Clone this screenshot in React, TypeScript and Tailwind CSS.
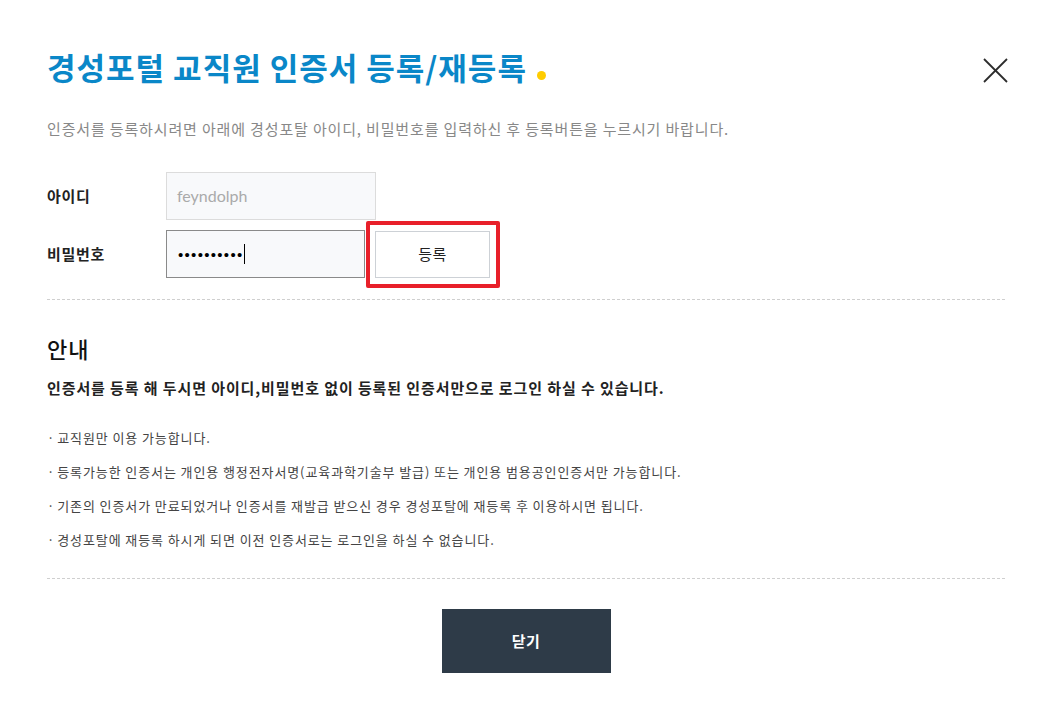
const notices = [
  "교직원만 이용 가능합니다.",
  "등록가능한 인증서는 개인용 행정전자서명(교육과학기술부 발급) 또는 개인용 범용공인인증서만 가능합니다.",
  "기존의 인증서가 만료되었거나 인증서를 재발급 받으신 경우 경성포탈에 재등록 후 이용하시면 됩니다.",
  "경성포탈에 재등록 하시게 되면 이전 인증서로는 로그인을 하실 수 없습니다.",
];

function CloseIcon() {
  return (
    <svg width="25" height="25" viewBox="0 0 25 25" fill="none" stroke="#2b2b2b" strokeWidth="1.8">
      <line x1="1" y1="1" x2="24" y2="24" />
      <line x1="24" y1="1" x2="1" y2="24" />
    </svg>
  );
}

export default function App() {
  return (
    <div
      className="min-h-screen bg-white text-[#222]"
      style={{ fontFamily: '"Noto Sans CJK KR", "Noto Sans", sans-serif' }}
    >
      <div className="pl-[47px] pr-[46px]">
        <header className="flex items-start justify-between pt-[48px]">
          <h1 className="flex items-end text-[31px] leading-[37px] font-bold tracking-[1px] text-[#0a87c8]">
            경성포털 교직원 인증서 등록/재등록
            <span className="mb-[5px] ml-[10px] inline-block h-[9px] w-[9px] rounded-full bg-[#ffcc00]" />
          </h1>
          <button className="-mr-[3px] mt-[10px]" aria-label="닫기">
            <CloseIcon />
          </button>
        </header>

        <p className="mt-[33px] text-[15px] leading-[22px] tracking-[0.85px] text-[#888]">
          인증서를 등록하시려면 아래에 경성포탈 아이디, 비밀번호를 입력하신 후 등록버튼을 누르시기 바랍니다.
        </p>

        <div className="mt-[32px] flex flex-col gap-[10px]">
          <div className="flex items-center">
            <span className="w-[119px] text-[15px] font-bold tracking-[0.7px]">아이디</span>
            <div
              className="flex h-[48px] w-[210px] items-center border border-[#dcdcdc] bg-[#f8f9fb] px-[10px] text-[16px] text-[#aaa]"
              style={{ fontFamily: "Lato, sans-serif" }}
            >
              feyndolph
            </div>
          </div>
          <div className="flex items-center">
            <span className="w-[119px] text-[15px] font-bold tracking-[0.7px]">비밀번호</span>
            <div className="flex h-[48px] w-[199px] items-center border border-[#8a8a8a] bg-[#f8f9fb] px-[11px]">
              <span className="text-[15px] leading-none tracking-[1.3px] text-black" style={{ fontFamily: "Arial, sans-serif" }}>
                ••••••••••
              </span>
              <span className="h-[20px] w-[1px] bg-black" />
            </div>
            <div className="relative ml-[10px]">
              <button className="flex h-[47px] w-[115px] items-center justify-center border border-[#cdd1d6] bg-white text-[15px] tracking-[0.5px] text-[#222]">
                등록
              </button>
              <span className="pointer-events-none absolute -top-[10px] -right-[10px] -bottom-[10px] -left-[9px] rounded-[2px] border-[4px] border-[#e8202a]" />
            </div>
          </div>
        </div>

        <hr className="mt-[21px] border-0 border-t border-dashed border-[#cfcfcf]" />

        <h2 className="mt-[33px] text-[22px] leading-[30px] font-medium tracking-[1px] text-[#111]">안내</h2>
        <p className="mt-[14px] text-[15px] leading-[22px] font-bold tracking-[0.9px] text-[#222]">
          인증서를 등록 해 두시면 아이디,비밀번호 없이 등록된 인증서만으로 로그인 하실 수 있습니다.
        </p>

        <ul className="mt-[29px] flex flex-col gap-[14px] text-[13px] leading-[20px] tracking-[0.9px] text-[#444]">
          {notices.map((n) => (
            <li key={n} className="flex">
              <span>·</span>
              <span className="ml-[2px]">{n}</span>
            </li>
          ))}
        </ul>

        <hr className="mt-[28px] border-0 border-t border-dashed border-[#cfcfcf]" />

        <div className="flex justify-center pt-[30px]">
          <button className="h-[64px] w-[169px] bg-[#2e3b48] text-[15px] font-bold tracking-[0.5px] text-white">닫기</button>
        </div>
      </div>
    </div>
  );
}
